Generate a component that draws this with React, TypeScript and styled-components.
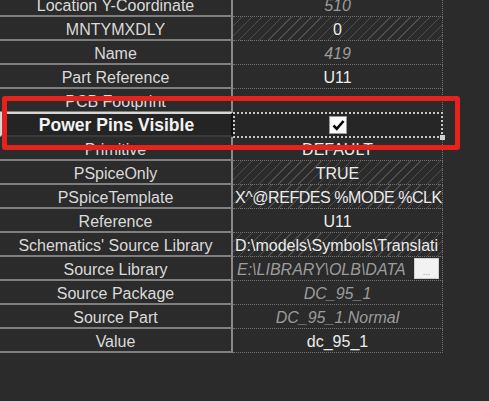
import React from "react";
import styled, { createGlobalStyle, css } from "styled-components";

const Global = createGlobalStyle`
  html, body { margin: 0; padding: 0; background: #2b2b2b; overflow: hidden; }
  #root { width: 489px; height: 401px; }
`;

const Page = styled.div`
  position: relative;
  width: 489px;
  height: 401px;
  overflow: hidden;
  background: #2b2b2b;
  font-family: "Liberation Sans", Arial, sans-serif;
`;

const Table = styled.div`
  display: grid;
  grid-template-columns: 233px 210px;
  grid-auto-rows: 24px;
  margin-top: -7px;
  width: 443px;
`;

const Label = styled.div<{ $active?: boolean }>`
  box-sizing: border-box;
  display: flex;
  align-items: center;
  justify-content: center;
  font-size: 16px;
  color: #dadada;
  white-space: nowrap;
  overflow: hidden;
  border-bottom: 2px solid #7e7e7e;
  border-right: 2px solid #8a8a8a;
  padding-top: 3px;
  ${(p) =>
    p.$active &&
    css`
      background: #242424;
      border-top: 2px solid #d6d6d6;
      border-left: 2px solid #d6d6d6;
      border-right: 2px solid #101010;
      border-bottom: 2px solid #3a3a3a;
      margin-top: -1px;
      padding-top: 1px;
      font-size: 17.5px;
      font-weight: bold;
      color: #f2f2f2;
    `}
`;

const hatch = css`
  background-image: repeating-linear-gradient(
    135deg,
    transparent 0px,
    transparent 6px,
    #4e4e4e 6px,
    #4e4e4e 7px
  );
`;

const Value = styled.div<{
  $hatched?: boolean;
  $left?: boolean;
  $inherit?: boolean;
  $tight?: boolean;
}>`
  box-sizing: border-box;
  display: flex;
  align-items: center;
  justify-content: ${(p) => (p.$left ? "flex-start" : "center")};
  padding: 3px 0 0 ${(p) => (p.$left ? "2px" : "0")};
  font-size: 16px;
  letter-spacing: ${(p) => (p.$tight ? "-0.45px" : "0")};
  color: ${(p) => (p.$inherit ? "#9c9c9c" : "#ececec")};
  font-style: ${(p) => (p.$inherit ? "italic" : "normal")};
  white-space: nowrap;
  overflow: hidden;
  border-bottom: 1px dotted #727272;
  border-right: 1px dotted #727272;
  ${(p) => p.$hatched && hatch}
`;

const Editor = styled.div`
  position: relative;
  box-sizing: border-box;
  display: flex;
  align-items: center;
  justify-content: center;
  margin-top: -1px;
  height: 26px;
  border: 2px dotted #c8c8c8;
  background: #262626;
`;

const Handle = styled.span`
  position: absolute;
  right: -4px;
  bottom: -4px;
  width: 5px;
  height: 5px;
  background: #d0d0d0;
`;

const CheckBox = styled.span`
  box-sizing: border-box;
  width: 18px;
  height: 18px;
  background: #fafafa;
  border: 1px solid #9a9a9a;
  display: flex;
  align-items: center;
  justify-content: center;
`;

const BrowseCell = styled(Value)`
  justify-content: space-between;
  padding: 0 3px 0 4px;
`;

const BrowseText = styled.span`
  padding-top: 3px;
`;

const BrowseButton = styled.span`
  box-sizing: border-box;
  width: 25px;
  height: 21px;
  background: #f2f2f2;
  border: 1px solid #d0d0d0;
  display: flex;
  align-items: flex-end;
  justify-content: center;
  font-style: normal;
  font-size: 9px;
  line-height: 9px;
  color: #9a9a9a;
  padding-bottom: 1px;
`;

const Highlight = styled.div`
  position: absolute;
  left: 2px;
  top: 96px;
  width: 458px;
  height: 54px;
  box-sizing: border-box;
  border: 5px solid #e5231c;
  border-radius: 3px;
  pointer-events: none;
`;

type Row = {
  label: string;
  value?: string;
  inherit?: boolean;
  hatched?: boolean;
  left?: boolean;
  tight?: boolean;
};

const before: Row[] = [
  { label: "Location Y-Coordinate", value: "510", inherit: true },
  { label: "MNTYMXDLY", value: "0", hatched: true },
  { label: "Name", value: "419", inherit: true },
  { label: "Part Reference", value: "U11" },
  { label: "PCB Footprint", value: "" },
];

const after: Row[] = [
  { label: "Primitive", value: "DEFAULT" },
  { label: "PSpiceOnly", value: "TRUE", hatched: true },
  { label: "PSpiceTemplate", value: "X^@REFDES %MODE %CLK", hatched: true, left: true, tight: true },
  { label: "Reference", value: "U11" },
  {
    label: "Schematics' Source Library",
    value: "D:\\models\\Symbols\\Translati",
    hatched: true,
    left: true,
  },
];

const tail: Row[] = [
  { label: "Source Package", value: "DC_95_1", inherit: true },
  { label: "Source Part", value: "DC_95_1.Normal", inherit: true },
  { label: "Value", value: "dc_95_1" },
];

const renderRows = (rows: Row[]) =>
  rows.map((r) => (
    <React.Fragment key={r.label}>
      <Label>{r.label}</Label>
      <Value $hatched={r.hatched} $left={r.left} $inherit={r.inherit} $tight={r.tight}>
        {r.value}
      </Value>
    </React.Fragment>
  ));

export default function App() {
  return (
    <Page>
      <Global />
      <Table>
        {renderRows(before)}
        <Label $active>Power Pins Visible</Label>
        <Editor>
          <CheckBox>
            <svg width="13" height="12" viewBox="0 0 13 12">
              <path d="M1.5 6.5 L4.8 9.8 L11.5 2" fill="none" stroke="#000" strokeWidth="2.6" />
            </svg>
          </CheckBox>
          <Handle />
        </Editor>
        {renderRows(after)}
        <Label>Source Library</Label>
        <BrowseCell $inherit>
          <BrowseText>E:\LIBRARY\OLB\DATA</BrowseText>
          <BrowseButton>...</BrowseButton>
        </BrowseCell>
        {renderRows(tail)}
      </Table>
      <Highlight />
    </Page>
  );
}
